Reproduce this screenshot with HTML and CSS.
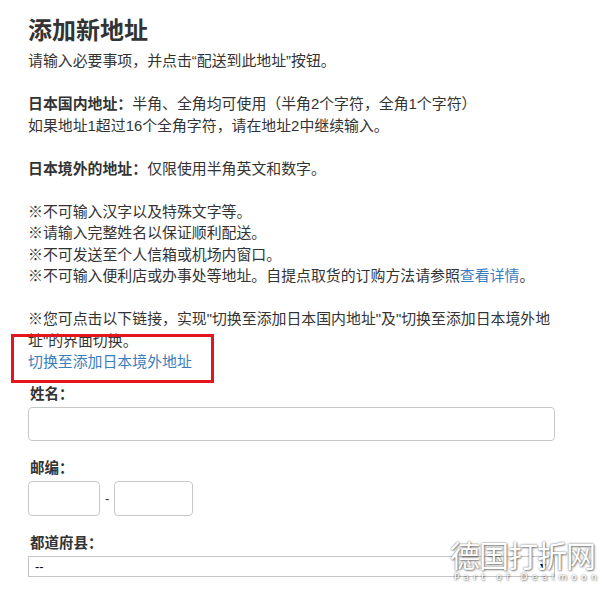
FILE: index.html
```html
<!DOCTYPE html>
<html lang="zh-CN">
<head>
  <meta charset="UTF-8" />
  <title>添加新地址</title>
  <link rel="stylesheet" href="styles.css">
</head>
<body>
  <div class="page">
    <h1>添加新地址</h1>
    <p>请输入必要事项，并点击“配送到此地址”按钮。</p>
    <p><b>日本国内地址：</b>半角、全角均可使用（半角2个字符，全角1个字符）<br>如果地址1超过16个全角字符，请在地址2中继续输入。</p>
    <p><b>日本境外的地址：</b>仅限使用半角英文和数字。</p>
    <p>※不可输入汉字以及特殊文字等。<br>※请输入完整姓名以保证顺利配送。<br>※不可发送至个人信箱或机场内窗口。<br>※不可输入便利店或办事处等地址。自提点取货的订购方法请参照<a href="#">查看详情</a>。</p>
    <p>※您可点击以下链接，实现"切换至添加日本国内地址"及"切换至添加日本境外地址"的界面切换。<br><a href="#">切换至添加日本境外地址</a></p>

    <form class="address-form">
      <div class="field">
        <label for="name">姓名：</label>
        <input type="text" id="name" class="text-input" />
      </div>
      <div class="field">
        <label>邮编：</label>
        <div class="zip-row">
          <input type="text" class="text-input zip1" />
          <span class="dash">-</span>
          <input type="text" class="text-input zip2" />
        </div>
      </div>
      <div class="field">
        <label for="pref">都道府县：</label>
        <div class="select-wrap">
          <select id="pref">
            <option>--</option>
          </select>
        </div>
      </div>
    </form>
  </div>

  <div class="highlight-box"></div>

  <div class="watermark">
    <div class="wm-title">德国打折网</div>
    <div class="wm-sub">Part of Dealmoon</div>
  </div>
</body>
</html>
```

FILE: styles.css
```css
html, body {
  margin: 0;
  padding: 0;
  background: #fff;
  color: #333;
  font-family: "Liberation Sans", "Noto Sans CJK SC", sans-serif;
  font-size: 14.9px;
}

body {
  position: relative;
  height: 594px;
  overflow: hidden;
}

.page {
  width: 527px;
  padding: 16px 0 0 28px;
}

h1 {
  margin: 0 0 5px;
  font-size: 24px;
  line-height: 30px;
  font-weight: 700;
  color: #333;
}

p {
  margin: 0 0 21.5px;
  line-height: 21.5px;
}

p:last-of-type {
  margin-bottom: 10px;
}

a {
  color: #3a7dbd;
  text-decoration: none;
}

.field {
  margin-bottom: 17px;
}

.field label {
  display: block;
  margin: 0 0 3px 2px;
  font-weight: 700;
  font-size: 14.5px;
  line-height: 20px;
}

.text-input {
  box-sizing: border-box;
  display: block;
  width: 100%;
  height: 34px;
  border: 1px solid #c8c8c8;
  border-radius: 4px;
  background: #fff;
  outline: none;
}

.zip-row {
  display: flex;
  align-items: center;
  gap: 5px;
}

.zip-row .text-input {
  height: 35px;
}

.zip1 {
  width: 72px;
}

.zip2 {
  width: 79px;
}

.dash {
  font-size: 13px;
  color: #333;
}

.select-wrap {
  position: relative;
}

.select-wrap select {
  box-sizing: border-box;
  display: block;
  width: 100%;
  height: 21px;
  padding: 0 6px;
  border: 1px solid #c4c4c4;
  border-radius: 0;
  background: #fff;
  color: #000;
  font-family: "Liberation Sans", sans-serif;
  font-size: 13px;
  appearance: none;
  -webkit-appearance: none;
  outline: none;
}

.select-wrap::after {
  content: "";
  position: absolute;
  right: 9px;
  top: 8px;
  border-left: 3px solid transparent;
  border-right: 3px solid transparent;
  border-top: 5px solid #000;
}

.highlight-box {
  position: absolute;
  left: 11px;
  top: 334px;
  width: 197px;
  height: 43px;
  border: 3px solid #e3161d;
}

.watermark {
  position: absolute;
  left: 450px;
  top: 536px;
  color: #fff;
  text-shadow: 0 0 2px rgba(0, 0, 0, 0.6), 1px 1px 2px rgba(0, 0, 0, 0.4);
  white-space: nowrap;
}

.wm-title {
  font-family: "Noto Sans CJK SC", sans-serif;
  font-size: 30px;
  line-height: 36px;
  letter-spacing: -1px;
}

.wm-sub {
  font-family: "DejaVu Sans", sans-serif;
  font-size: 9px;
  line-height: 10px;
  letter-spacing: 4.3px;
  margin-left: 4px;
}
```
